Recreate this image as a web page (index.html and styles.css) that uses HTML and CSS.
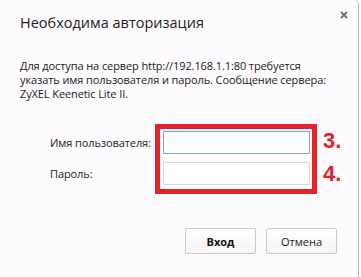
FILE: index.html
```html
<!DOCTYPE html>
<html lang="ru">
<head>
    <meta charset="UTF-8">
    <meta name="viewport" content="width=device-width, initial-scale=1.0">
    <title>Необходима авторизация</title>
    <link rel="stylesheet" href="styles.css">
</head>
<body>
    <div class="dialog">
        <div class="dialog-header">
            <h1 class="dialog-title">Необходима авторизация</h1>
            <svg class="close-icon" width="8" height="8" viewBox="0 0 8 8">
                <path d="M1 1 L7 7 M7 1 L1 7" stroke="#6a6a6a" stroke-width="1.8" fill="none"/>
            </svg>
        </div>

        <p class="message">Для доступа на сервер http://192.168.1.1:80 требуется<br>указать имя пользователя и пароль. Сообщение сервера:<br>ZyXEL Keenetic Lite II.</p>

        <div class="fields">
            <label class="field-label" for="user">Имя пользователя:</label>
            <input class="field-input focused" id="user" type="text">
            <label class="field-label" for="pass">Пароль:</label>
            <input class="field-input" id="pass" type="password">
        </div>

        <div class="buttons">
            <button class="btn btn-primary">Вход</button>
            <button class="btn">Отмена</button>
        </div>

        <!-- annotation over the screenshot -->
        <div class="mark-box"></div>
        <span class="mark-num mark-3">3.</span>
        <span class="mark-num mark-4">4.</span>
    </div>
</body>
</html>
```

FILE: styles.css
```css
* {
    margin: 0;
    padding: 0;
    box-sizing: border-box;
}

body {
    font-family: 'Open Sans', 'Liberation Sans', sans-serif;
    background: #fdfbfd;
    color: #1e1e1e;
    width: 361px;
    height: 277px;
    overflow: hidden;
}

.dialog {
    position: relative;
    width: 359px;
    height: 277px;
    border-right: 1px solid #b9b9b9;
    border-top-right-radius: 5px;
    background: #fdfbfd;
}

.dialog-header {
    display: flex;
    justify-content: space-between;
    align-items: flex-start;
    padding: 13px 10px 0 20px;
}

.dialog-title {
    font-size: 14.5px;
    font-weight: normal;
    line-height: 20px;
    color: #222;
}

.close-icon {
    margin-top: -2px;
}

.message {
    margin-top: 26px;
    padding: 0 20px;
    font-size: 11px;
    line-height: 14px;
    letter-spacing: -0.1px;
    color: #1a1a1a;
    white-space: nowrap;
}

.fields {
    display: grid;
    grid-template-columns: 113px 147px;
    row-gap: 8px;
    align-items: center;
    margin-top: 30px;
    padding-left: 50px;
}

.field-label {
    font-size: 11px;
    letter-spacing: -0.1px;
    color: #222;
    white-space: nowrap;
}

.field-input {
    height: 23px;
    border: 1px solid #d9d9d9;
    background: #fff;
    outline: none;
}

.field-input.focused {
    border-color: #7ea6d8;
}

.buttons {
    display: flex;
    justify-content: flex-end;
    gap: 10px;
    margin-top: 43px;
    padding-right: 21px;
}

.btn {
    width: 71px;
    height: 26px;
    border: 1px solid #c9c9c9;
    border-radius: 2px;
    background: linear-gradient(#ffffff, #f4f4f4);
    font-family: 'Open Sans', 'Liberation Sans', sans-serif;
    font-size: 11px;
    color: #222;
}

.btn-primary {
    font-weight: bold;
    color: #111;
}

.mark-box {
    position: absolute;
    left: 155px;
    top: 124px;
    width: 162px;
    height: 70px;
    border: 5px solid #e3222b;
}

.mark-num {
    position: absolute;
    left: 323px;
    font-family: 'Liberation Sans', Arial, sans-serif;
    font-size: 22px;
    font-weight: bold;
    line-height: 22px;
    color: #e3222b;
}

.mark-3 {
    top: 130px;
}

.mark-4 {
    top: 163px;
}
```
